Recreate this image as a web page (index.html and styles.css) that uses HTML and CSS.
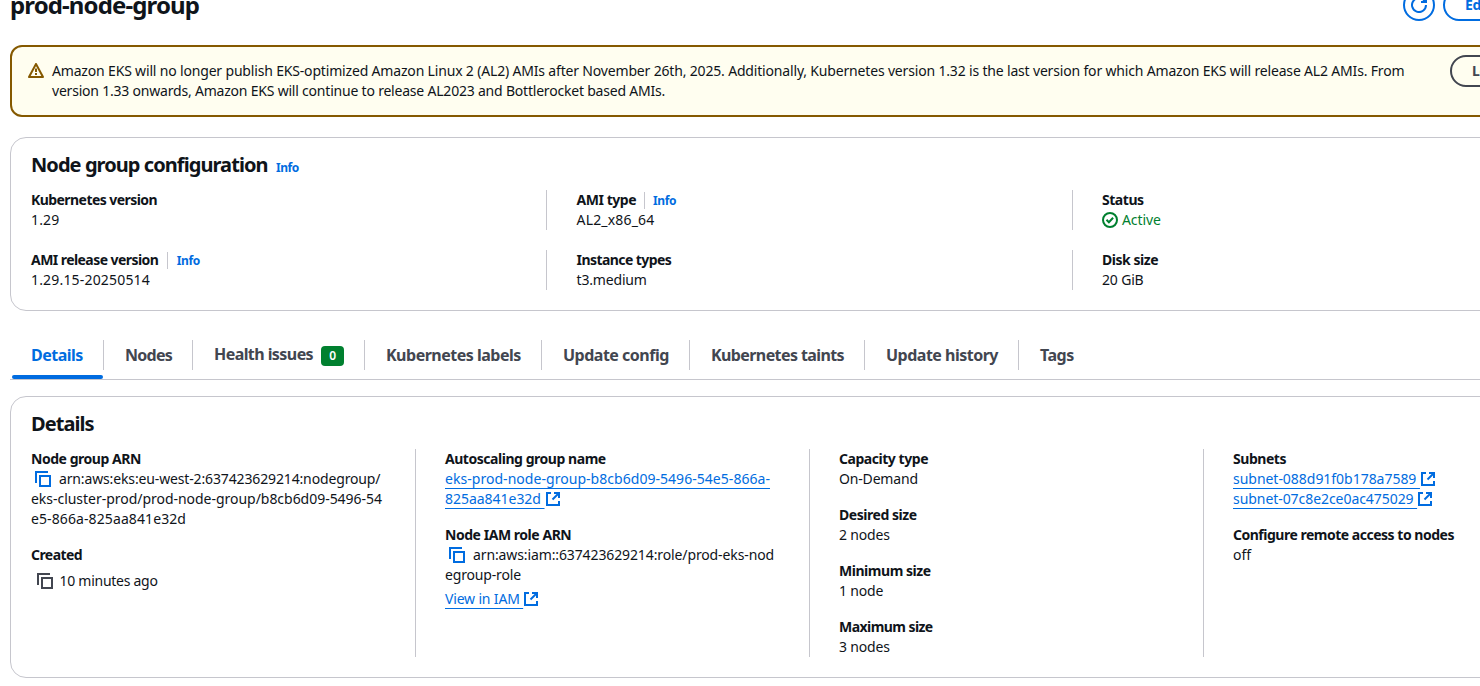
FILE: index.html
```html
<!DOCTYPE html>
<html lang="en">
<head>
<meta charset="utf-8">
<title>prod-node-group</title>
<link rel="stylesheet" href="styles.css">
</head>
<body>
<svg class="sprite" aria-hidden="true">
  <symbol id="copy" viewBox="0 0 16 16"><path d="M15 5H5v10h10V5Z"/><path d="M13 1H1v11"/></symbol>
  <symbol id="external" viewBox="0 0 16 16"><path d="M9 2h5v5"/><path d="m7.5 8.5 6-6"/><path d="M14 10v4H2V2h4"/></symbol>
</svg>
<main class="page">
  <header class="page-header">
    <h1>prod-node-group</h1>
    <div class="actions">
      <button class="btn btn-icon" aria-label="Refresh"><svg class="icon" viewBox="0 0 16 16"><path d="M10 5h5V0"/><path d="M12 5l3-2"/><path d="M15 8a7 7 0 1 1-.9-3.4"/></svg></button>
      <button class="btn btn-edit">Edit</button>
    </div>
  </header>

  <section class="alert">
    <svg class="icon alert-icon" viewBox="0 0 16 16"><path d="M8 1 1 14h14L8 1Z" stroke-linejoin="round"/><path d="M8 5.5V9M8 10v2"/></svg>
    <p><span class="line-one">Amazon EKS will no longer publish EKS-optimized Amazon Linux 2 (AL2) AMIs after November 26th, 2025. Additionally, Kubernetes version 1.32 is the last version for which Amazon EKS will release AL2 AMIs. From</span><br><span class="line-two">version 1.33 onwards, Amazon EKS will continue to release AL2023 and Bottlerocket based AMIs.</span></p>
    <button class="btn btn-dark">Learn more</button>
  </section>

  <section class="card config">
    <h2>Node group configuration <a class="info">Info</a></h2>
    <div class="config-grid">
      <dl><dt class="snug">Kubernetes version</dt><dd class="digits">1.29</dd></dl>
      <dl><dt>AMI type<a class="info split">Info</a></dt><dd class="digits">AL2_x86_64</dd></dl>
      <dl><dt>Status</dt><dd class="status"><svg class="icon" viewBox="0 0 16 16"><circle cx="8" cy="8" r="7"/><path d="m4.5 7.8 2.4 2.4 4.2-4.4"/></svg>Active</dd></dl>
      <dl><dt class="snug">AMI release version<a class="info split wide">Info</a></dt><dd class="digits">1.29.15-20250514</dd></dl>
      <dl><dt class="snug">Instance types</dt><dd>t3.medium</dd></dl>
      <dl><dt>Disk size</dt><dd>20 GiB</dd></dl>
    </div>
  </section>

  <nav class="tabs">
    <a class="tab active"><span>Details</span></a>
    <a class="tab"><span class="nodes">Nodes</span></a>
    <a class="tab with-badge"><span>Health issues</span><b class="badge">0</b></a>
    <a class="tab"><span>Kubernetes labels</span></a>
    <a class="tab"><span>Update config</span></a>
    <a class="tab"><span class="taints">Kubernetes taints</span></a>
    <a class="tab"><span>Update history</span></a>
    <a class="tab"><span>Tags</span></a>
  </nav>

  <section class="card details">
    <h2>Details</h2>
    <div class="details-grid">
      <div class="col">
        <dl><dt>Node group ARN</dt><dd><svg class="icon copy"><use href="#copy"/></svg><span class="arn">arn:aws:eks:eu-west-2:637423629214:nodegroup/</span><br><span class="plain">eks-cluster-prod/prod-node-group/b8cb6d09-5496-54</span><br><span class="hex">e5-866a-825aa841e32d</span></dd></dl>
        <dl><dt class="snug">Created</dt><dd class="created"><svg class="icon"><use href="#copy"/></svg><span>10 minutes ago</span></dd></dl>
      </div>
      <div class="col">
        <dl><dt>Autoscaling group name</dt><dd class="plain"><a class="link hex-light">eks-prod-node-group-b8cb6d09-5496-54e5-866a-</a><br><a class="link">825aa841e32d&nbsp;</a><svg class="icon ext"><use href="#external"/></svg></dd></dl>
        <dl><dt>Node IAM role ARN</dt><dd><svg class="icon copy"><use href="#copy"/></svg><span class="role">arn:aws:iam::637423629214:role/prod-eks-nod</span><br>egroup-role<div class="view"><a class="link">View in IAM&nbsp;</a><svg class="icon ext"><use href="#external"/></svg></div></dd></dl>
      </div>
      <div class="col">
        <dl><dt>Capacity type</dt><dd>On-Demand</dd></dl>
        <dl><dt>Desired size</dt><dd>2 nodes</dd></dl>
        <dl><dt>Minimum size</dt><dd>1 node</dd></dl>
        <dl><dt class="snug">Maximum size</dt><dd>3 nodes</dd></dl>
      </div>
      <div class="col">
        <dl><dt>Subnets</dt><dd class="plain"><a class="link">subnet-088d91f0b178a7589&nbsp;</a><svg class="icon ext"><use href="#external"/></svg><br><a class="link tight">subnet-07c8e2ce0ac475029&nbsp;</a><svg class="icon ext"><use href="#external"/></svg></dd></dl>
        <dl><dt class="remote">Configure remote access to nodes</dt><dd class="plain">off</dd></dl>
      </div>
    </div>
  </section>
</main>
</body>
</html>
```

FILE: styles.css
```css
* { box-sizing: border-box; }
html { overflow: hidden; }
body {
  margin: 0;
  height: 686px;
  overflow: hidden;
  background: #fff;
  color: #0f141a;
  font: 14px/20px "Noto Sans", "Open Sans", sans-serif;
}
h1, h2, p, dl, dd { margin: 0; }
.sprite { display: none; }
.page { width: 1618px; padding: 0 10px; }
.icon { width: 16px; height: 16px; flex: none; fill: none; stroke: currentColor; stroke-width: 2; }

.page-header { display: flex; height: 45px; }
h1 { flex: none; width: 1393px; margin-top: -10px; font-size: 24px; line-height: 30px; letter-spacing: -.88px; white-space: nowrap; }
.actions { display: flex; gap: 8px; margin-top: -11px; }
.btn {
  flex: none;
  height: 32px;
  padding: 0 20px;
  border: 2px solid #006ce0;
  border-radius: 16px;
  background: transparent;
  color: #006ce0;
  font: 700 14px/20px "Noto Sans", sans-serif;
  letter-spacing: -.45px;
  text-align: left;
  white-space: nowrap;
}
.btn-icon { width: 32px; padding: 6px; display: flex; }
.btn-dark { width: 142px; margin: 8px 0 0 auto; border-color: #424650; color: #424650; }

.alert { display: flex; height: 72px; padding-right: 14px; border: 2px solid #855900; border-radius: 12px; background: #fffef0; }
.alert-icon { margin: 16px 8px 0 16px; color: #855900; }
.alert p { margin-top: 14px; white-space: nowrap; }
.line-one { letter-spacing: -.172px; }
.line-two { letter-spacing: -.207px; }

.card { border: 1px solid #c6c6cd; border-radius: 16px; padding: 15px 10px 20px; }
.config { margin-top: 20px; height: 174px; }
h2 { margin: 0 0 13px 10px; font-size: 20px; line-height: 24px; letter-spacing: -.93px; white-space: nowrap; }
.info { color: #006ce0; font-size: 12px; line-height: 16px; font-weight: 700; letter-spacing: -.38px; }
h2 .info { margin-left: 4px; }
.info.split { margin-left: 7.5px; padding-left: 8.5px; border-left: 1px solid #c6c6cd; }
.info.wide { margin-left: 9px; }
.config-grid { display: grid; grid-template-columns: 526px 526px 526px; row-gap: 20px; margin-left: -1px; }
dt { font-weight: 700; letter-spacing: -.46px; white-space: nowrap; }
dt.snug { letter-spacing: -.56px; }
dt.remote { letter-spacing: -.49px; }
dd { letter-spacing: -.17px; white-space: nowrap; }
.config-grid dl { height: 40px; padding-left: 29px; border-left: 1px solid #c6c6cd; }
.config-grid dl:nth-child(3n + 1) { border-left: 0; padding-left: 11px; }
.config-grid dl:nth-child(3n + 2) { padding-left: 29.5px; }
.digits { letter-spacing: .18px; }
.plain { letter-spacing: -.03px; }
.hex { letter-spacing: .1px; }
.hex-light { letter-spacing: .04px; }
.tight { letter-spacing: -.06px; }
.arn { letter-spacing: -.14px; }
.role { letter-spacing: -.115px; }
.status { display: flex; align-items: center; gap: 4px; color: #00802f; letter-spacing: -.1px; }

.tabs {
  display: grid;
  grid-template-columns: 94px 89px 172px 177px 148px 175px 154px auto;
  height: 50px;
  margin: 19px 0 16px;
  border-bottom: 1px solid #c6c6cd;
}
.tab {
  position: relative;
  height: 30px;
  margin-top: 10px;
  padding: 5px 0 0 21px;
  border-right: 1px solid #c6c6cd;
  color: #424650;
  font-size: 16px;
  font-weight: 700;
  letter-spacing: -.5px;
  white-space: nowrap;
}
.nodes { letter-spacing: -.7px; }
.taints { letter-spacing: -.6px; }
.tab:last-child { border-right: 0; }
.tab.active { color: #006ce0; }
.tab.active::after { content: ""; position: absolute; left: 2px; right: 0; bottom: -9px; height: 4px; border-radius: 2px; background: #006ce0; }
.with-badge { display: flex; gap: 8px; padding-top: 4px; letter-spacing: -.57px; }
.badge { width: 23px; height: 20px; margin-top: 2px; border-radius: 4px; background: #00802f; color: #fff; font-size: 12px; font-weight: 600; text-align: center; letter-spacing: 0; }

.details { height: 282px; }
.details-grid { display: grid; grid-template-columns: repeat(4, 394px); }
.col { display: flex; flex-direction: column; gap: 16px; height: 208px; padding-left: 29px; border-left: 1px solid #c6c6cd; }
.col:first-child { border-left: 0; padding-left: 10px; }
.details-grid .icon { vertical-align: -3px; }
.copy { margin: 0 8px 0 4px; color: #006ce0; }
.created { display: flex; align-items: center; gap: 6.5px; height: 32px; padding-left: 6px; letter-spacing: -.27px; }
.created .icon { color: #424650; }
.link { color: #006ce0; text-decoration: underline 1px; text-underline-offset: 4px; text-decoration-skip-ink: none; }
.ext { color: #006ce0; }
.link.hex-light { letter-spacing: .04px; }
.view { margin-top: 4px; }
```
